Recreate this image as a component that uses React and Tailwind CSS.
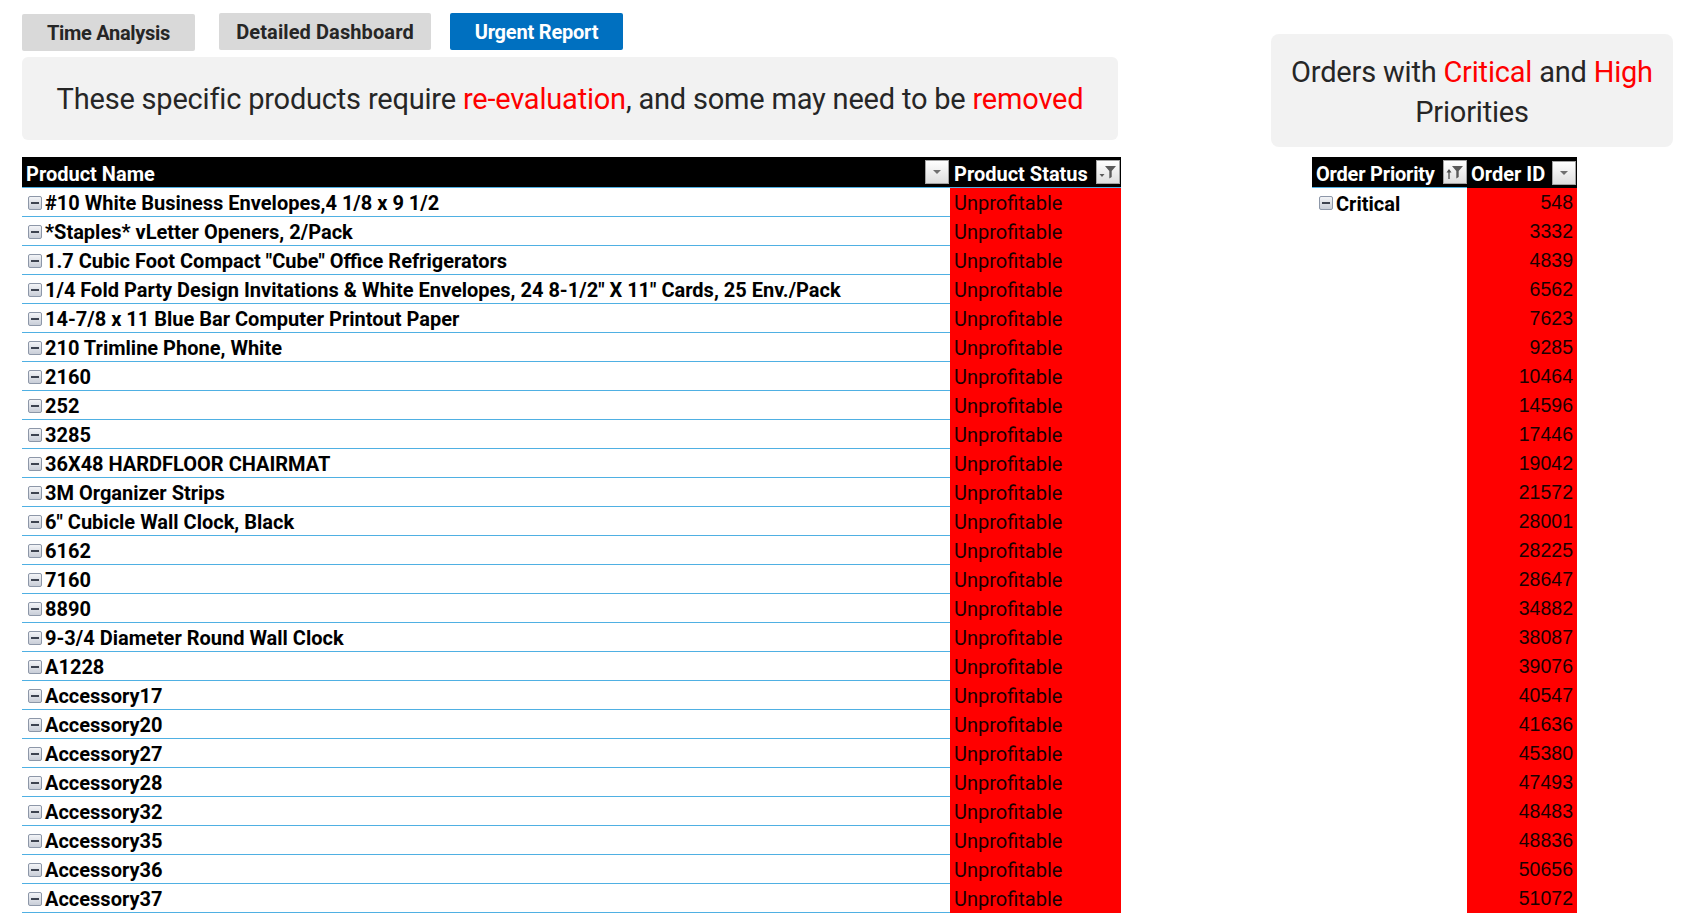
import React from "react";

const products = [
  "#10 White Business Envelopes,4 1/8 x 9 1/2",
  "*Staples* vLetter Openers, 2/Pack",
  '1.7 Cubic Foot Compact "Cube" Office Refrigerators',
  '1/4 Fold Party Design Invitations & White Envelopes, 24 8-1/2" X 11" Cards, 25 Env./Pack',
  "14-7/8 x 11 Blue Bar Computer Printout Paper",
  "210 Trimline Phone, White",
  "2160",
  "252",
  "3285",
  "36X48 HARDFLOOR CHAIRMAT",
  "3M Organizer Strips",
  '6" Cubicle Wall Clock, Black',
  "6162",
  "7160",
  "8890",
  "9-3/4 Diameter Round Wall Clock",
  "A1228",
  "Accessory17",
  "Accessory20",
  "Accessory27",
  "Accessory28",
  "Accessory32",
  "Accessory35",
  "Accessory36",
  "Accessory37",
];

const ids = [
  548, 3332, 4839, 6562, 7623, 9285, 10464, 14596, 17446, 19042, 21572, 28001,
  28225, 28647, 34882, 38087, 39076, 40547, 41636, 45380, 47493, 48483, 48836,
  50656, 51072,
];

function Btn({ children }) {
  return (
    <div className="w-[24px] h-[24px] border border-[#a3a3a3] bg-linear-to-b from-[#ffffff] to-[#dedede] flex items-center justify-center shrink-0">
      {children}
    </div>
  );
}

function DropIcon() {
  return (
    <svg width="12" height="8" viewBox="0 0 12 8">
      <path d="M2 2h8L6 6z" fill="#707070" />
    </svg>
  );
}

function FilterIcon() {
  return (
    <svg width="20" height="18" viewBox="0 0 20 18">
      <path d="M7 3h11l-4.3 5v6l-2.4 1.5V8z" fill="#5a5a5a" />
      <path d="M1.5 11h5l-2.5 3z" fill="#5a5a5a" />
    </svg>
  );
}

function SortFilterIcon() {
  return (
    <svg width="20" height="18" viewBox="0 0 20 18">
      <path d="M7 3h11l-4.3 5v6l-2.4 1.5V8z" fill="#5a5a5a" />
      <path d="M4 16V7" stroke="#4a4a4a" strokeWidth="1.3" />
      <path d="M1.5 9.5L4 6l2.5 3.5z" fill="#4a4a4a" />
    </svg>
  );
}

function Minus() {
  return (
    <div className="mt-[1px] w-[14px] h-[14px] rounded-[2px] border border-[#8d97a8] bg-linear-to-b from-[#f3f4f7] to-[#c9ced8] flex items-center justify-center shrink-0">
      <div className="w-[8px] h-[2px] bg-[#3d4350]" />
    </div>
  );
}

export default function App() {
  return (
    <div className="w-[1689px] h-[913px] overflow-hidden bg-white flex items-start font-['Roboto',sans-serif]">
      {/* Left column */}
      <div className="ml-[22px] w-[1099px] flex flex-col">
        <div className="mt-[13px] h-[37px] flex items-start">
          <div className="mt-px w-[173px] h-[37px] rounded-[2px] bg-[#d9d9d9] flex items-center justify-center text-[20px] font-bold text-[#262626] tracking-[-0.3px]">
            Time Analysis
          </div>
          <div className="ml-[24px] w-[212px] h-[37px] rounded-[2px] bg-[#d9d9d9] flex items-center justify-center text-[20px] font-bold text-[#262626] tracking-[0.1px]">
            Detailed Dashboard
          </div>
          <div className="ml-[19px] w-[173px] h-[37px] rounded-[2px] bg-[#0070c0] flex items-center justify-center text-[20px] font-bold text-white tracking-[-0.2px]">
            Urgent Report
          </div>
        </div>

        <div className="mt-[7px] w-[1096px] h-[83px] rounded-[6px] bg-[#f2f2f2] flex items-center justify-center pt-[2px] text-[29px] text-[#262626] tracking-[-0.2px]">
          <span>
            These specific products require{" "}
            <span className="text-[#ff0000]">re-evaluation</span>, and some may
            need to be <span className="text-[#ff0000]">removed</span>
          </span>
        </div>

        <div className="mt-[17px] w-[1099px] flex flex-col">
          <div className="flex h-[31px] bg-black border-b border-[#4fb0e3]">
            <div className="w-[928px] flex items-center justify-between pl-[4px] pr-[1px]">
              <span className="text-[20px] font-bold text-white pt-[3px]">Product Name</span>
              <Btn>
                <DropIcon />
              </Btn>
            </div>
            <div className="w-[171px] flex items-center justify-between pl-[4px] pr-[1px]">
              <span className="text-[20px] font-bold text-white pt-[3px]">Product Status</span>
              <Btn>
                <FilterIcon />
              </Btn>
            </div>
          </div>
          {products.map((p, i) => (
            <div key={i} className="flex h-[29px]">
              <div className="w-[928px] border-b border-[#4fb0e3] flex items-center pl-[6px] gap-[3px]">
                <Minus />
                <span className="text-[20px] font-bold text-black whitespace-nowrap pt-[2px]">{p}</span>
              </div>
              <div className="w-[171px] bg-[#ff0000] flex items-center pl-[4px]">
                <span className="text-[20px] text-[#1a0000] pt-[1px]">Unprofitable</span>
              </div>
            </div>
          ))}
        </div>
      </div>

      {/* Right column */}
      <div className="ml-[150px] flex flex-col">
        <div className="mt-[34px] w-[402px] h-[113px] rounded-[8px] bg-[#f2f2f2] flex items-center justify-center text-center pt-[3px] text-[29px] leading-[40px] text-[#262626] tracking-[-0.2px]">
          <span>
            Orders with <span className="text-[#ff0000]">Critical</span> and{" "}
            <span className="text-[#ff0000]">High</span>
            <br />
            Priorities
          </span>
        </div>
        <div className="mt-[10px] ml-[41px] w-[265px] flex flex-col">
          <div className="flex h-[31px] bg-black">
            <div className="w-[155px] flex items-center justify-between pl-[4px] border-b border-[#4fb0e3]">
              <span className="text-[20px] font-bold text-white pt-[3px] tracking-[-0.2px]">Order Priority</span>
              <Btn>
                <SortFilterIcon />
              </Btn>
            </div>
            <div className="w-[110px] flex items-center justify-between pl-[4px] pr-[1px]">
              <span className="text-[20px] font-bold text-white pt-[3px]">Order ID</span>
              <Btn>
                <DropIcon />
              </Btn>
            </div>
          </div>
          {ids.map((id, i) => (
            <div key={i} className="flex h-[29px]">
              <div className="w-[155px] flex items-center pl-[7px] gap-[3px]">
                {i === 0 && (
                  <>
                    <Minus />
                    <span className="text-[20px] font-bold text-black pt-[2px]">Critical</span>
                  </>
                )}
              </div>
              <div className="w-[110px] bg-[#ff0000] flex items-center justify-end pr-[4px]">
                <span className="text-[19.5px] text-[#1a0000] pt-[1px] font-['Liberation_Sans',sans-serif]">{id}</span>
              </div>
            </div>
          ))}
        </div>
      </div>
    </div>
  );
}
